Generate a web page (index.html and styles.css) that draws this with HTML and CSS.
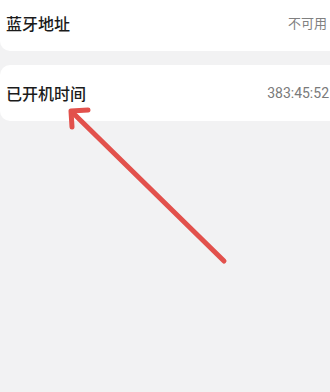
FILE: index.html
```html
<!DOCTYPE html>
<html lang="zh-CN">
<head>
  <meta charset="UTF-8">
  <meta name="viewport" content="width=device-width, initial-scale=1.0">
  <title>设备信息</title>
  <link rel="stylesheet" href="styles.css">
</head>
<body>

<div class="info-list">
  <div class="info-card first">
    <span class="info-label">蓝牙地址</span>
    <span class="info-value">不可用</span>
  </div>
  <div class="info-card">
    <span class="info-label">已开机时间</span>
    <span class="info-value num">383:45:52</span>
  </div>
</div>

<!-- annotation arrow -->
<svg class="arrow" width="330" height="392" viewBox="0 0 330 392">
  <g stroke="#e2514c" stroke-width="5" stroke-linecap="round" stroke-linejoin="round" fill="none">
    <line x1="224" y1="261" x2="72" y2="112"/>
    <polyline points="88,110 71,111 72,127"/>
  </g>
</svg>

</body>
</html>
```

FILE: styles.css
```css
body {
  margin: 0;
  padding: 0;
  background-color: #f2f2f3;
  font-family: "Noto Sans CJK SC", "Noto Sans", sans-serif;
  width: 330px;
  height: 392px;
  overflow: hidden;
  position: relative;
}

.info-list {
  display: flex;
  flex-direction: column;
  gap: 14px;
  margin-top: -10px;
}

.info-card {
  background-color: #ffffff;
  border-radius: 10px 0 0 10px;
  display: flex;
  justify-content: space-between;
  align-items: center;
  height: 56px;
  padding: 0 1px 0 6px;
}

.info-card.first {
  height: 61px;
  padding-top: 4px;
  box-sizing: border-box;
}

.info-label {
  font-size: 16px;
  color: #1b1b1b;
  font-weight: 500;
}

.info-value {
  font-size: 13px;
  color: #808080;
  margin-right: 2px;
}

.info-value.num {
  font-family: Roboto, "Noto Sans", sans-serif;
  font-size: 14px;
  margin-right: 0;
  color: #7a7a7a;
}

.arrow {
  position: absolute;
  top: 0;
  left: 0;
}
```
